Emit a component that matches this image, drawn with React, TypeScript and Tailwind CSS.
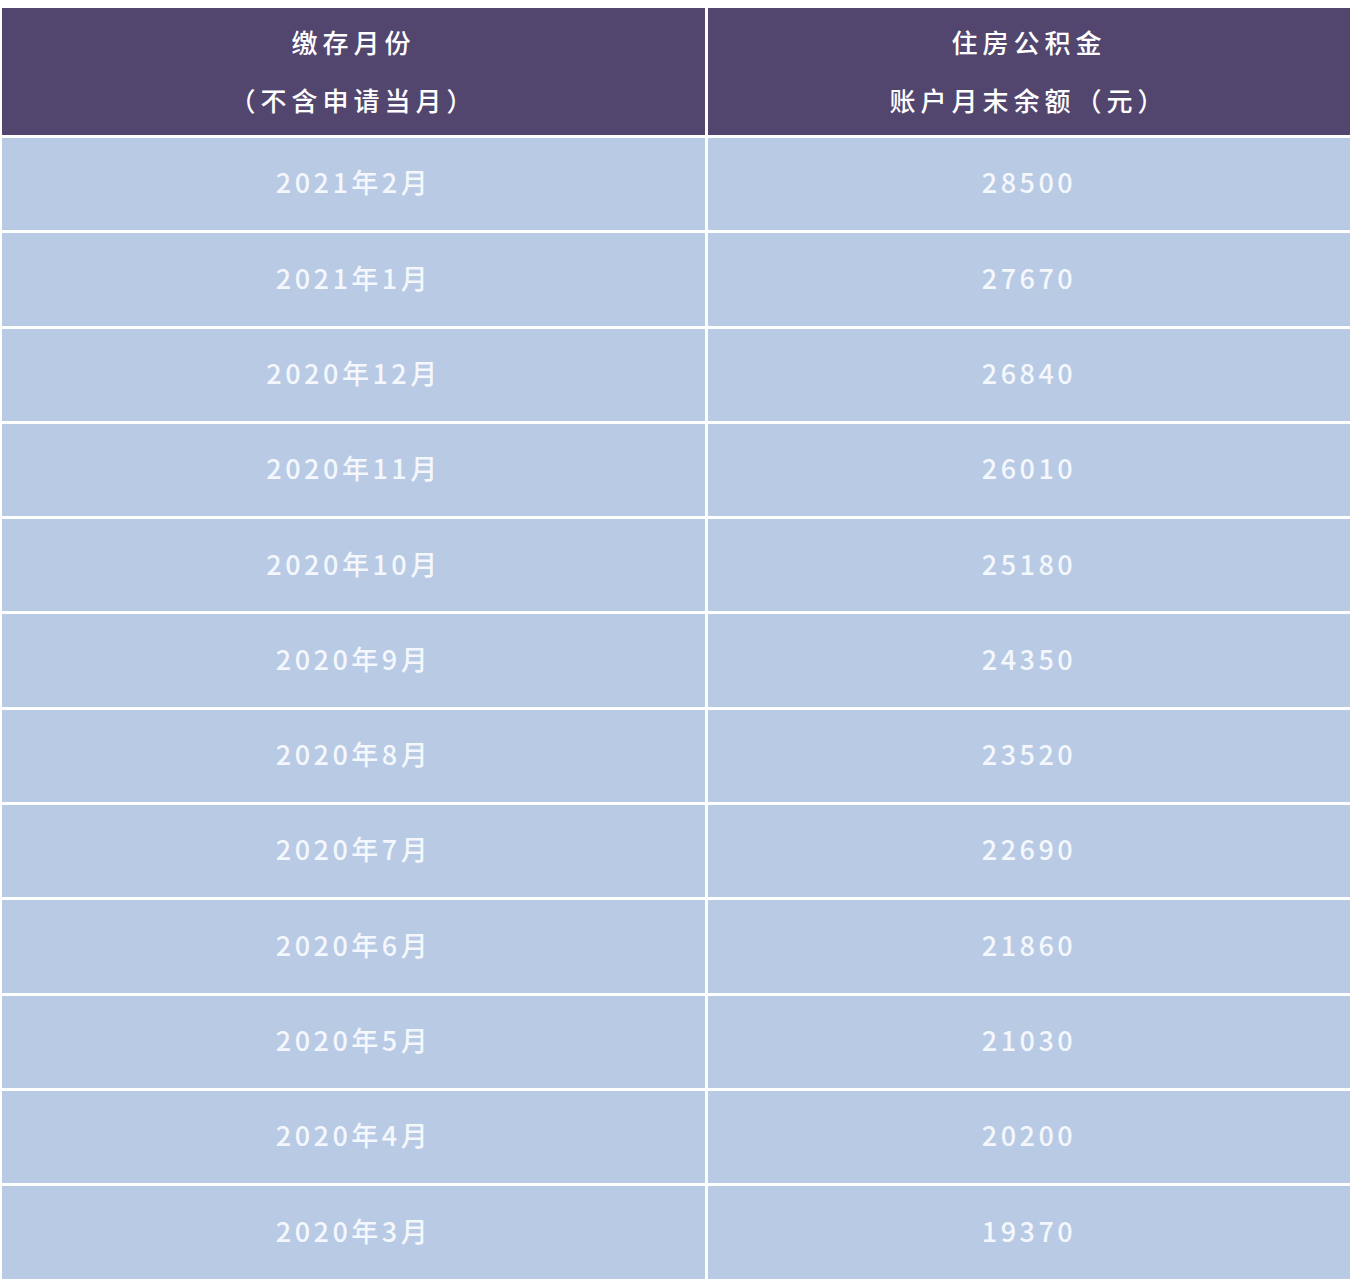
import React from "react";

const rows: [string, string][] = [
  ["2021年2月", "28500"],
  ["2021年1月", "27670"],
  ["2020年12月", "26840"],
  ["2020年11月", "26010"],
  ["2020年10月", "25180"],
  ["2020年9月", "24350"],
  ["2020年8月", "23520"],
  ["2020年7月", "22690"],
  ["2020年6月", "21860"],
  ["2020年5月", "21030"],
  ["2020年4月", "20200"],
  ["2020年3月", "19370"],
];

const font = {
  fontFamily: '"Noto Sans CJK SC", "Noto Sans", sans-serif',
};

export default function App() {
  return (
    <div className="bg-white w-[1353px] h-[1280px] overflow-hidden pt-[8px] pl-[2px] pr-[3px]" style={font}>
      <div className="grid grid-cols-[703px_642px] gap-x-[3px] gap-y-[3px]">
        <div className="bg-[#52466f] h-[127px] flex flex-col items-center justify-center text-white text-[26px] tracking-[5px] leading-[58px] font-medium pb-[2px]">
          <div>缴存月份</div>
          <div>（不含申请当月）</div>
        </div>
        <div className="bg-[#52466f] h-[127px] flex flex-col items-center justify-center text-white text-[26px] tracking-[5px] leading-[58px] font-medium pb-[2px]">
          <div>住房公积金</div>
          <div>账户月末余额（元）</div>
        </div>
        {rows.map(([m, v]) => (
          <React.Fragment key={m}>
            <div className="bg-[#b9cae5] h-[92.3px] flex items-center justify-center text-[#f4f7fc] text-[27px] tracking-[3.5px] font-medium pb-[3px]">
              {m}
            </div>
            <div className="bg-[#b9cae5] h-[92.3px] flex items-center justify-center text-[#f4f7fc] text-[27px] tracking-[3.5px] font-medium pb-[3px]">
              {v}
            </div>
          </React.Fragment>
        ))}
      </div>
    </div>
  );
}
